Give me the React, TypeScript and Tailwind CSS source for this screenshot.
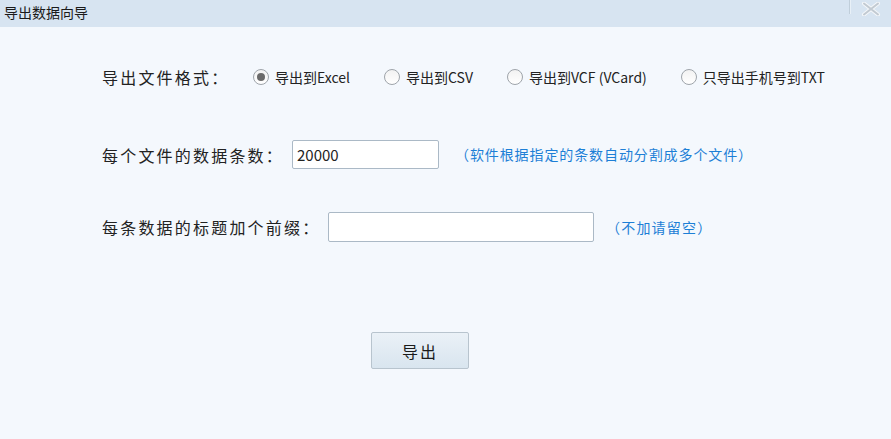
import React, { useState, type FC } from "react";

const FONT = "font-['Noto_Sans_CJK_SC','Liberation_Sans',sans-serif]";

const formats = ["导出到Excel", "导出到CSV", "导出到VCF (VCard)", "只导出手机号到TXT"];

const Radio: FC<{ checked: boolean; label: string; onClick: () => void }> = ({ checked, label, onClick }) => {
	return (
		<button type="button" onClick={onClick} className="flex items-center gap-[6px] mr-[34px] text-[14px] text-[#222]">
			<span className="flex items-center justify-center w-[16px] h-[16px] rounded-full border border-[#9ea4aa] bg-gradient-to-b from-[#f2f2f2] to-white">
				{checked ? <span className="w-[8px] h-[8px] rounded-full bg-[#6a6a6a]" /> : null}
			</span>
			{label}
		</button>
	);
};

export default function App() {
	const [format, setFormat] = useState(0);

	return (
		<div className={`w-[891px] h-[439px] bg-[#f4f8fd] flex flex-col ${FONT}`}>
			<div className="h-[27px] bg-[#d7e4f1] flex items-start justify-between">
				<span className="pl-[4px] pt-[3px] text-[14px] leading-[18px] text-[#1a1a1a]">导出数据向导</span>
				<div className="flex items-start h-full">
					<div className="w-[2px] h-[14px] border-l border-[#c0ceda] border-r border-r-[#e8f0f7]" />
					<div className="w-[40px] flex justify-center pt-[2px]">
						<svg width="20" height="14" viewBox="0 0 20 14">
							<path d="M3 1.5 L17 12.5 M17 1.5 L3 12.5" stroke="#f4f7fa" strokeWidth="4" strokeLinecap="round" />
							<path d="M3 1.5 L17 12.5 M17 1.5 L3 12.5" stroke="#c2cad2" strokeWidth="2" strokeLinecap="round" />
						</svg>
					</div>
				</div>
			</div>

			<div className="flex flex-col pl-[102px] pt-[35px] text-[#222]">
				<div className="flex items-center h-[30px]">
					<span className="w-[151px] text-[16px] tracking-[2.2px]">导出文件格式：</span>
					{formats.map((f, i) => (
						<Radio key={f} label={f} checked={format === i} onClick={() => setFormat(i)} />
					))}
				</div>

				<div className="flex items-center mt-[48px] h-[29px]">
					<span className="w-[190px] text-[16px] tracking-[2.2px]">每个文件的数据条数：</span>
					<input
						defaultValue="20000"
						className="w-[147px] h-[29px] border border-[#abb9c6] rounded-[2px] bg-white px-[4px] text-[15px] text-[#222] outline-none"
					/>
					<span className="ml-[16px] text-[14px] text-[#1d7fd6] tracking-[0.9px]">（软件根据指定的条数自动分割成多个文件）</span>
				</div>

				<div className="flex items-center mt-[43px] h-[30px]">
					<span className="w-[226px] text-[16px] tracking-[2.2px]">每条数据的标题加个前缀：</span>
					<input className="w-[266px] h-[30px] border border-[#abb9c6] rounded-[2px] bg-white px-[4px] text-[15px] outline-none" />
					<span className="ml-[12px] text-[14px] text-[#1d7fd6] tracking-[1.2px]">（不加请留空）</span>
				</div>

				<button
					type="button"
					className="mt-[90px] ml-[269px] w-[98px] h-[37px] border border-[#b8c4ce] rounded-[2px] bg-gradient-to-b from-[#eaf1f7] to-[#d9e5ef] text-[16px] text-[#1a1a1a] tracking-[2px]"
				>
					导出
				</button>
			</div>
		</div>
	);
}
